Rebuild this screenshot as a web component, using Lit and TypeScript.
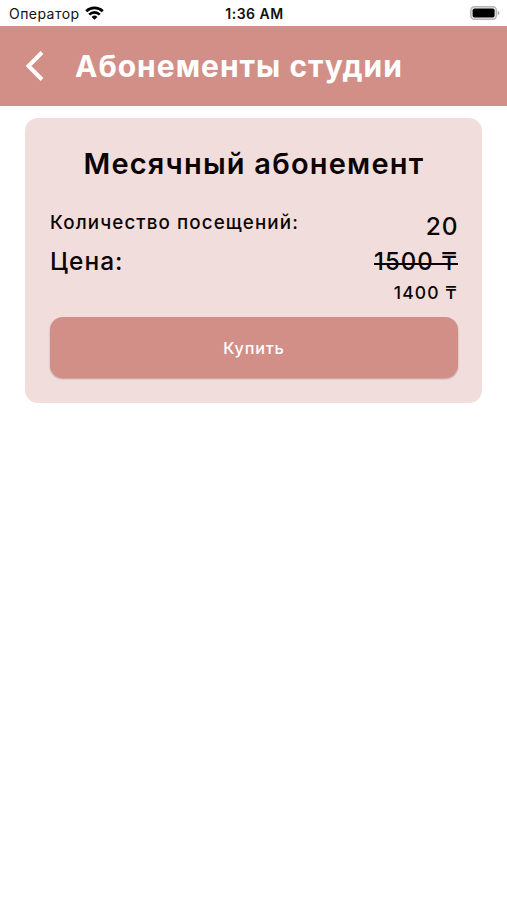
import { LitElement, html, css } from "lit";
import { customElement } from "lit/decorators.js";

@customElement("app-root")
export class AppRoot extends LitElement {
  static styles = css`
    :host {
      display: block;
      height: 900px;
      background: #fff;
      color: #0b0506;
      font-family: Inter, "Liberation Sans", sans-serif;
      overflow: hidden;
    }
    .status {
      height: 25.5px;
      display: grid;
      grid-template-columns: 1fr auto 1fr;
      align-items: center;
      padding: 1px 7px 0 9px;
      box-sizing: border-box;
      font-size: 14px;
      color: #111;
    }
    .carrier { display: flex; align-items: center; gap: 5px; letter-spacing: 0.45px; }
    .carrier svg { margin-top: -1px; }
    .time { font-weight: 600; letter-spacing: 0.5px; }
    .battery { justify-self: end; display: block; }
    .bar {
      height: 80px;
      background: #d28f87;
      display: flex;
      align-items: center;
      padding-left: 25px;
      gap: 30px;
      color: #fff;
    }
    .title { font-size: 30px; font-weight: 700; letter-spacing: 1px; line-height: 36px; }
    .card {
      margin: 12.5px 24.6px 0 25.4px;
      height: 284.5px;
      box-sizing: border-box;
      padding: 25px 24.6px;
      border-radius: 13px;
      background: #f1dedc;
      display: flex;
      flex-direction: column;
    }
    .name { text-align: center; font-size: 29px; font-weight: 600; line-height: 42px; letter-spacing: 1.2px; white-space: nowrap; }
    .row { display: flex; justify-content: space-between; white-space: nowrap; }
    .visits { margin-top: 22.5px; height: 36px; }
    .label { font-size: 18.8px; font-weight: 500; line-height: 29px; letter-spacing: 1.1px; }
    .big { font-size: 24.5px; font-weight: 500; line-height: 34px; letter-spacing: 1px; }
    .count { line-height: 37px; letter-spacing: 0.8px; margin-right: -0.5px; }
    .old { position: relative; font-size: 24px; line-height: 35px; letter-spacing: 1px; }
    .old::after {
      content: "";
      position: absolute;
      left: 0;
      right: 0;
      top: 19px;
      height: 2px;
      background: currentColor;
    }
    .new { text-align: right; font-size: 17.5px; font-weight: 500; line-height: 28px; letter-spacing: 1.1px; }
    .buy {
      margin: 10.5px 0 0;
      padding: 2px 0 0;
      height: 60.5px;
      border: 0;
      border-radius: 13px;
      background: #d28f87;
      color: #fff;
      font: 500 16.3px/58px Inter, sans-serif;
      letter-spacing: 0.75px;
      box-shadow: 0 1px 2px rgba(80, 30, 25, 0.35);
    }
  `;

  render() {
    return html`
      <div class="status">
        <div class="carrier">
          <span>Оператор</span>
          <svg width="19" height="14" viewBox="0 0 19 14" fill="none" stroke="#000" stroke-width="2.7">
            <path d="M1.2 5.2a12 12 0 0 1 16.6 0M4.2 8.6a7.6 7.6 0 0 1 10.6 0" />
            <path d="M9.5 13.8 6.6 10.9a4.2 4.2 0 0 1 5.8 0z" fill="#000" stroke="none" />
          </svg>
        </div>
        <span class="time">1:36 AM</span>
        <svg class="battery" width="30" height="14" viewBox="0 0 30 14">
          <rect x=".8" y=".8" width="25.6" height="12.4" rx="3.6" fill="#eee" stroke="#b5b5b5" stroke-width="1.5" />
          <rect x="2.6" y="2.5" width="22" height="9" rx="1.8" fill="#000" />
          <path d="M27.8 4.8v4.4q1.8-.7 1.8-2.2t-1.8-2.2" fill="#aaa" />
        </svg>
      </div>
      <header class="bar">
        <svg width="20" height="32" viewBox="0 0 20 32" fill="none" stroke="#fff" stroke-width="4">
          <path d="M17 2.5 3.5 16 17 29.5" />
        </svg>
        <span class="title">Абонементы студии</span>
      </header>
      <section class="card">
        <div class="name">Месячный абонемент</div>
        <div class="row visits"><span class="label">Количество посещений:</span><span class="big count">20</span></div>
        <div class="row"><span class="big">Цена:</span><span class="big old">1500 ₸</span></div>
        <div class="new">1400 ₸</div>
        <button class="buy">Купить</button>
      </section>
    `;
  }
}
